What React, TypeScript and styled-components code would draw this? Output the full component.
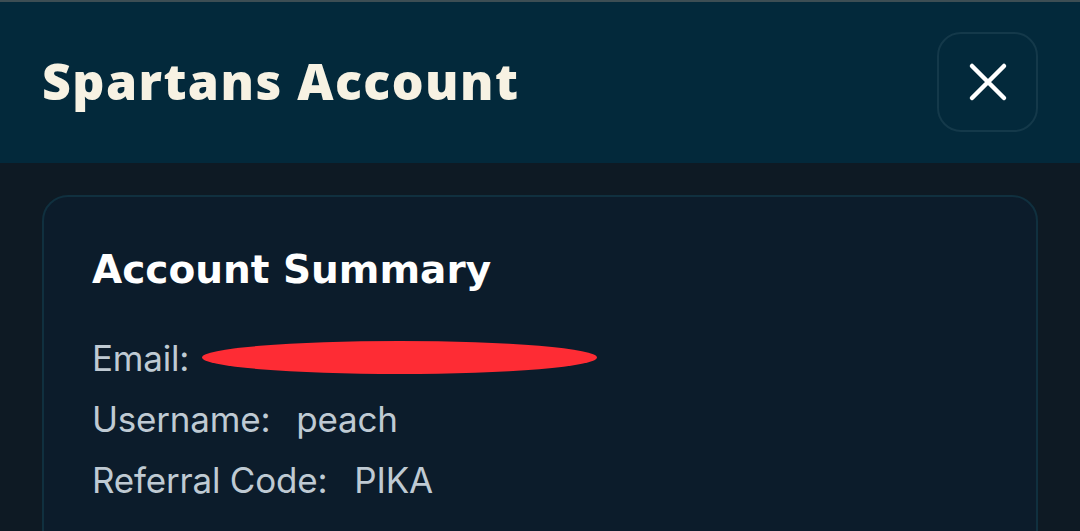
import styled, { createGlobalStyle } from 'styled-components';

const GlobalStyle = createGlobalStyle`
  html, body {
    margin: 0;
    padding: 0;
    background: #0e1a24;
  }
  body {
    font-family: Inter, "Noto Sans", sans-serif;
  }
`;

const Page = styled.div`
  width: 1080px;
  height: 531px;
  overflow: hidden;
  background: #0e1a24;
  border-top: 2px solid #3d4e54;
  box-sizing: border-box;
`;

const Header = styled.header`
  height: 161px;
  background: #03293b;
  display: flex;
  align-items: center;
  justify-content: space-between;
  padding: 0 42px;
`;

const Title = styled.h1`
  margin: 0 0 4px;
  font-family: "Open Sans", "Noto Sans", sans-serif;
  font-weight: 800;
  font-size: 50px;
  letter-spacing: 1.45px;
  color: #f7f2e3;
`;

const CloseButton = styled.button`
  width: 101px;
  height: 100px;
  margin-bottom: 2px;
  border-radius: 24px;
  border: 2px solid #14394a;
  background: transparent;
  display: flex;
  align-items: center;
  justify-content: center;
  padding: 0;
  cursor: pointer;
`;

const Body = styled.main`
  padding: 32px 42px 0;
`;

const Card = styled.section`
  background: #0c1c2b;
  border: 2px solid #10303f;
  border-radius: 26px;
  padding: 50px 48px 40px;
  height: 400px;
`;

const CardTitle = styled.h2`
  margin: 0 0 35px;
  font-family: "DejaVu Sans", sans-serif;
  font-weight: 700;
  font-size: 39px;
  color: #ffffff;
`;

const InfoRow = styled.div`
  display: flex;
  align-items: center;
  height: 61px;
  font-size: 35px;
  color: #bfcad3;
  letter-spacing: -0.2px;
`;

const Label = styled.span<{ $gap: number }>`
  margin-right: ${p => p.$gap}px;
`;

const Redacted = styled.span`
  display: inline-block;
  width: 395px;
  height: 33px;
  border-radius: 50%;
  background: #fe2c34;
`;

const XIcon = () => (
  <svg width="40" height="40" viewBox="0 0 40 40" fill="none">
    <path d="M4 4L36 36M36 4L4 36" stroke="#ffffff" strokeWidth="4.5" strokeLinecap="round" />
  </svg>
);

export default function App() {
  return (
    <Page>
      <GlobalStyle />
      <Header>
        <Title>Spartans Account</Title>
        <CloseButton aria-label="Close">
          <XIcon />
        </CloseButton>
      </Header>
      <Body>
        <Card>
          <CardTitle>Account Summary</CardTitle>
          <InfoRow>
            <Label $gap={13}>Email:</Label>
            <Redacted />
          </InfoRow>
          <InfoRow>
            <Label $gap={26}>Username:</Label>
            <span>peach</span>
          </InfoRow>
          <InfoRow>
            <Label $gap={27}>Referral Code:</Label>
            <span>PIKA</span>
          </InfoRow>
        </Card>
      </Body>
    </Page>
  );
}
